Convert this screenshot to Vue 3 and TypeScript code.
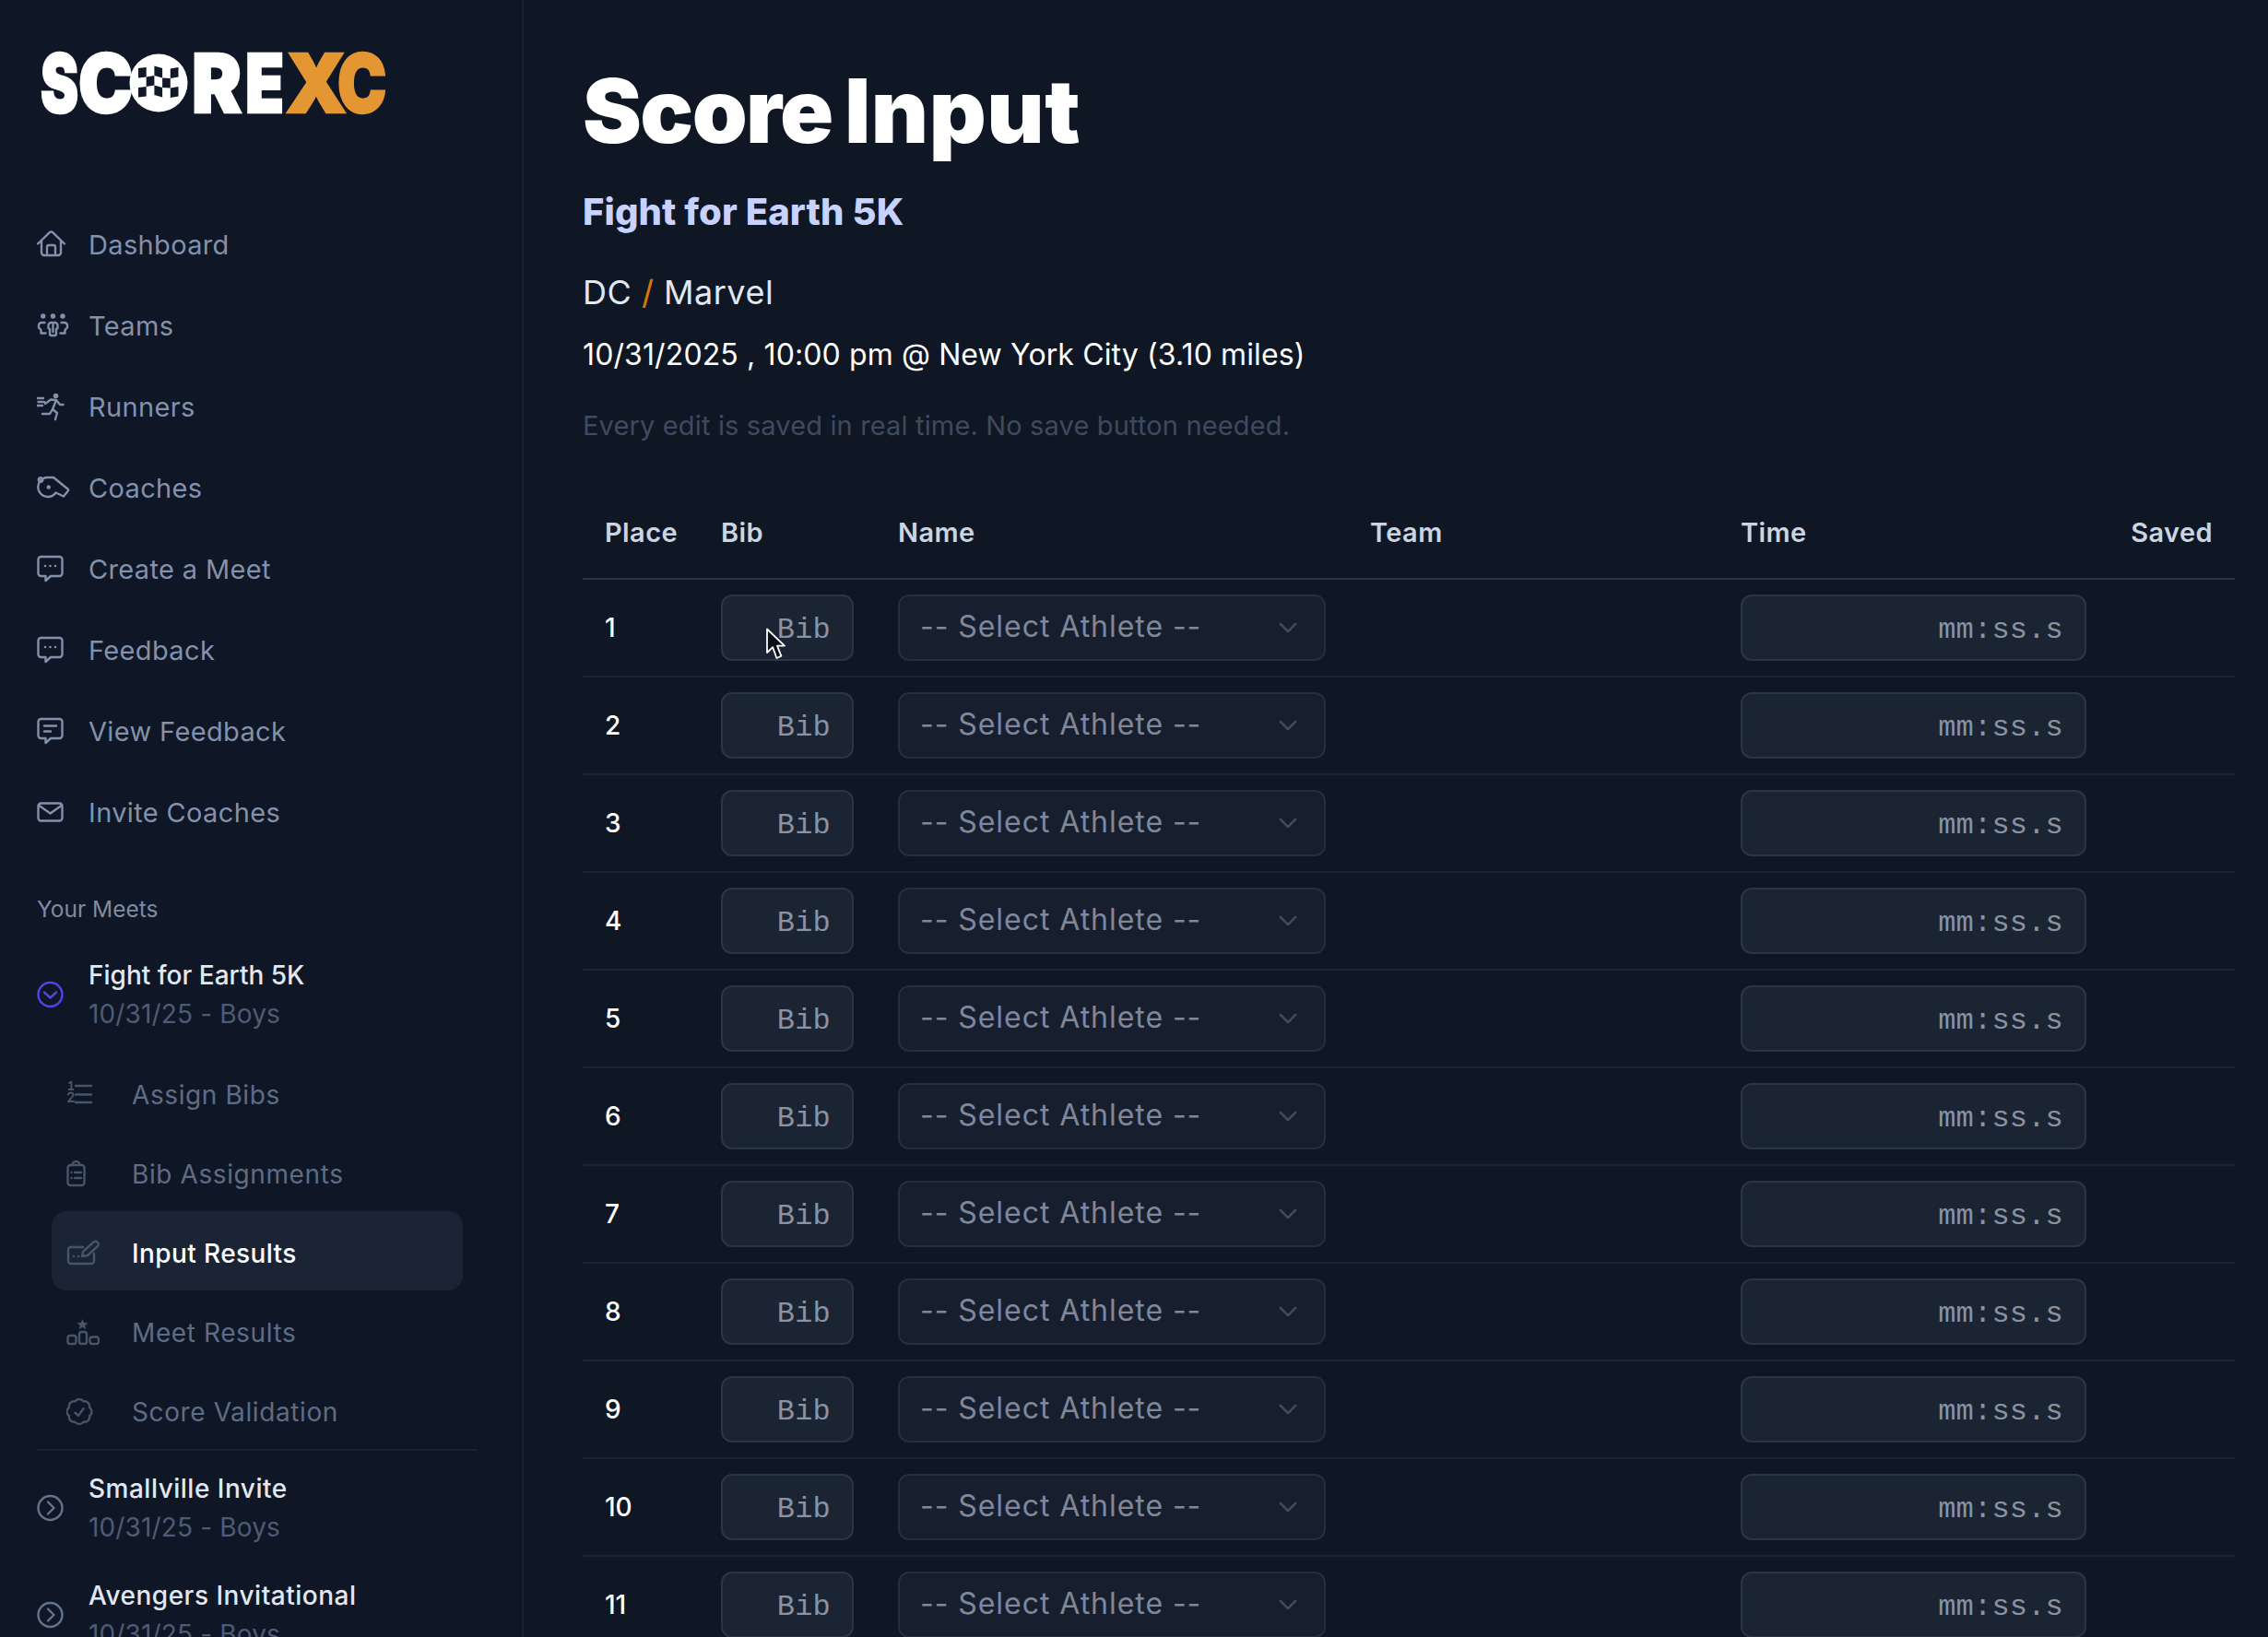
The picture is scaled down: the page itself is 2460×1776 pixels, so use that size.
<script setup lang="ts">
interface NavItem { label: string; icon: string }
interface Meet { name: string; date: string; open: boolean }

const stroke = (d: string) => `<path d="${d}"/>`
const dots = (pts: number[][], r = 1.3) =>
  pts.map(([x, y]) => `<circle cx="${x}" cy="${y}" r="${r}" fill="currentColor" stroke="none"/>`).join('')

const chatShape = 'M4.5 5H24.5a3 3 0 0 1 3 3V23a3 3 0 0 1-3 3H15L9.5 31V26H4.5a3 3 0 0 1-3-3V8a3 3 0 0 1 3-3z'

const icons: Record<string, string> = {
  home: stroke('M1 17.5 13.8 5.2a2.4 2.4 0 0 1 3.4 0L30 17.5M5 14V27a3 3 0 0 0 3 3H23a3 3 0 0 0 3-3V14M11 30V21a2 2 0 0 1 2-2h5a2 2 0 0 1 2 2V30'),
  teams:
    dots([[6.7, 8], [17.5, 8], [28, 8]], 2.7) +
    stroke('M12.5 18a3 3 0 0 1 3-3h4a3 3 0 0 1 3 3v3l-1.5 1v5a2 2 0 0 1-2 2h-3a2 2 0 0 1-2-2v-5l-1.5-1zM17.5 17v8M8.5 15H5a3 3 0 0 0-3 3v2.5L4.5 23v3.5h5M26.5 15H30a3 3 0 0 1 3 3v2.5L30.5 23v3.5h-5'),
  runner:
    dots([[20.5, 6.5]], 2.8) +
    stroke('M0 9H7M1.5 13H8M0 17H6M9 15 15 10.5 21 11 25 16H28.5M21 11 17 21 22 25 20 32M17 21 14 26H6'),
  whistle:
    stroke('M12 7H18L33.8 19.8a1.2 1.2 0 0 1-.1 1.9L29 27.5 20.5 23.5A10.5 10.5 0 1 1 12 7z') +
    dots([[12.7, 17.5]], 2.2) +
    '<circle cx="4" cy="9.5" r="2.2"/>',
  chat: stroke(chatShape) + dots([[9, 15], [14.5, 15], [20, 15]]),
  lines: stroke(chatShape) + stroke('M8 12.5H21M8 18.5H15'),
  mail: '<rect x="1.5" y="8.5" width="26" height="19" rx="3"/>' + stroke('M2.5 11 14.5 19.5 26.5 11'),
  list:
    stroke('M10 11H27M10 20.5H27M10 29H27') +
    '<g stroke-width="2"><path d="M3 8l2.4-1.5V15M2.6 15H7.4M2 20.5a2.8 2.8 0 0 1 5.5.6c0 1.8-3.6 4-5.5 7H8"/></g>',
  clipboard:
    '<rect x="1.5" y="11" width="18" height="22" rx="3"/>' +
    stroke('M6.5 11a4 4 0 0 1 8 0M9 19H16M9 25H16') +
    dots([[5.5, 19], [5.5, 25]], 1.2),
  edit:
    stroke('M18 14H5a3 3 0 0 0-3 3V29a3 3 0 0 0 3 3H27a3 3 0 0 0 3-3V21M17 24l1-5L29 9a3 3 0 0 1 5 4L23 23z') +
    dots([[8, 24], [13, 24]]),
  podium:
    '<path fill="currentColor" stroke="none" d="M17.5 6l1.7 3.9 4.3.4-3.2 2.8 1 4.2-3.8-2.2-3.8 2.2 1-4.2-3.2-2.8 4.3-.4z"/>' +
    '<rect x="1.5" y="24" width="9" height="9" rx="2.5"/><rect x="14" y="20" width="8" height="13" rx="2.5"/><rect x="25.5" y="25.5" width="9.5" height="7.5" rx="2.5"/>',
  badge:
    '<g transform="translate(-4 2.5) scale(1.5)" stroke-width="1.6"><path d="M9 12.75 11.25 15 15 9.75M21 12c0 1.268-.63 2.39-1.593 3.068a3.745 3.745 0 0 1-1.043 3.296 3.745 3.745 0 0 1-3.296 1.043A3.745 3.745 0 0 1 12 21c-1.268 0-2.39-.63-3.068-1.593a3.746 3.746 0 0 1-3.296-1.043 3.746 3.746 0 0 1-1.043-3.296A3.745 3.745 0 0 1 3 12c0-1.268.63-2.39 1.593-3.068a3.745 3.745 0 0 1 1.043-3.296 3.746 3.746 0 0 1 3.296-1.043A3.746 3.746 0 0 1 12 3c1.268 0 2.39.63 3.068 1.593a3.746 3.746 0 0 1 3.296 1.043 3.746 3.746 0 0 1 1.043 3.296A3.745 3.745 0 0 1 21 12Z"/></g>',
  open: '<circle cx="14.5" cy="18" r="13"/>' + stroke('M8 15.5 14.5 21.5 21 15.5'),
  closed: '<circle cx="14.5" cy="18" r="13"/>' + stroke('M12 11.5 18.5 18 12 24.5'),
}

const nav: NavItem[] = [
  { label: 'Dashboard', icon: 'home' },
  { label: 'Teams', icon: 'teams' },
  { label: 'Runners', icon: 'runner' },
  { label: 'Coaches', icon: 'whistle' },
  { label: 'Create a Meet', icon: 'chat' },
  { label: 'Feedback', icon: 'chat' },
  { label: 'View Feedback', icon: 'lines' },
  { label: 'Invite Coaches', icon: 'mail' },
]

const subNav: (NavItem & { active?: boolean })[] = [
  { label: 'Assign Bibs', icon: 'list' },
  { label: 'Bib Assignments', icon: 'clipboard' },
  { label: 'Input Results', icon: 'edit', active: true },
  { label: 'Meet Results', icon: 'podium' },
  { label: 'Score Validation', icon: 'badge' },
]

const others: Meet[] = [
  { name: 'Smallville Invite', date: '10/31/25 - Boys', open: false },
  { name: 'Avengers Invitational', date: '10/31/25 - Boys', open: false },
]

const places = Array.from({ length: 12 }, (_, i) => i + 1)

const colX = [10, 18.7, 27.4, 36.1, 44.8, 53.5]
const rowY = [15, 25.5, 36, 46.5]
const wave = [1, 0, -1.5, 1, 1.5, 0]
const flag = [
  [0, 0], [2, 0], [4, 0],
  [1, 1], [3, 1],
  [0, 2], [2, 2], [4, 2],
].map(([c, r]) =>
  [
    [colX[c], rowY[r] + wave[c]],
    [colX[c + 1], rowY[r] + wave[c + 1]],
    [colX[c + 1], rowY[r + 1] + wave[c + 1]],
    [colX[c], rowY[r + 1] + wave[c]],
  ].map((p) => p.join(',')).join(' '),
)
</script>

<template>
  <div class="page">
    <aside class="sidebar">
      <div class="logo" role="img" aria-label="ScoreXC">
        <span class="ltr l-s">S</span>
        <span class="ltr l-c">C</span>
        <svg class="logo-o" viewBox="0 0 64 64" width="64" height="64" aria-hidden="true">
          <circle cx="32" cy="32" r="31.5" fill="#fff" />
          <polygon v-for="p in flag" :key="p" :points="p" fill="#111827" />
        </svg>
        <span class="ltr l-r">R</span>
        <span class="ltr l-e">E</span>
        <span class="ltr l-x">X</span>
        <span class="ltr l-c2">C</span>
      </div>

      <nav class="nav">
        <a v-for="item in nav" :key="item.label" class="nav-item">
          <svg class="ico" viewBox="0 0 36 36" v-html="icons[item.icon]" />
          <span>{{ item.label }}</span>
        </a>
      </nav>

      <div class="section-label">Your Meets</div>

      <div class="meet first">
        <svg class="ico ico-open" viewBox="0 0 36 36" v-html="icons.open" />
        <div class="meet-text">
          <div class="meet-name">Fight for Earth 5K</div>
          <div class="meet-date">10/31/25 - Boys</div>
        </div>
      </div>

      <div class="subnav">
        <a v-for="item in subNav" :key="item.label" class="sub-item" :class="{ active: item.active }">
          <svg class="ico" viewBox="0 0 36 36" v-html="icons[item.icon]" />
          <span class="sub-label">{{ item.label }}</span>
        </a>
      </div>

      <div class="meets-rest">
        <div v-for="m in others" :key="m.name" class="meet">
          <svg class="ico ico-closed" viewBox="0 0 36 36" v-html="icons.closed" />
          <div class="meet-text">
            <div class="meet-name rest">{{ m.name }}</div>
            <div class="meet-date">{{ m.date }}</div>
          </div>
        </div>
      </div>
    </aside>

    <main class="main">
      <h1 class="title">Score <span class="title-b">Input</span></h1>
      <h2 class="subtitle">Fight for Earth 5K</h2>
      <div class="teams">DC <span class="slash">/</span> Marvel</div>
      <div class="when">10/31/2025 , 10:00 pm @ New York City (3.10 miles)</div>
      <p class="notice">Every edit is saved in real time. No save button needed.</p>

      <div class="table">
        <div class="row head">
          <div>Place</div>
          <div>Bib</div>
          <div>Name</div>
          <div>Team</div>
          <div>Time</div>
          <div class="saved">Saved</div>
        </div>
        <div v-for="n in places" :key="n" class="row">
          <div class="place">{{ n }}</div>
          <div><input class="field bib" type="text" placeholder="Bib" /></div>
          <div class="select-wrap">
            <select class="select">
              <option>-- Select Athlete --</option>
            </select>
            <svg class="chev" viewBox="0 0 24 24" width="28" height="28" fill="none" stroke="currentColor" stroke-width="2.2" stroke-linecap="round" stroke-linejoin="round">
              <path d="M5 8.5l7 7 7-7" />
            </svg>
          </div>
          <div></div>
          <div><input class="field time" type="text" placeholder="mm:ss.s" /></div>
          <div></div>
        </div>
      </div>
    </main>

    <svg class="cursor" width="24" height="36" viewBox="0 0 24 36" aria-hidden="true">
      <path d="M2 1.5V27l6.2-5.8L12.4 33l5-2.2-4.4-11.2H21z" fill="#0b0f18" stroke="#fff" stroke-width="1.8" stroke-linejoin="round" />
    </svg>
  </div>
</template>

<style>
html, body { margin: 0; background: #0f1725; }
</style>

<style scoped>
.page {
  position: relative;
  display: flex;
  width: 2460px;
  height: 1776px;
  overflow: hidden;
  background: #0f1725;
  font-family: Inter, "Noto Sans", sans-serif;
}
.sidebar {
  flex: none;
  width: 568px;
  box-sizing: border-box;
  padding: 58px 50px 0 40px;
  border-right: 2px solid #1a2231;
  background: #0f1625;
}
.logo {
  display: flex;
  align-items: center;
  height: 64px;
  margin-left: 4px;
  color: #fff;
}
.ltr {
  display: block;
  font-size: 88px;
  font-weight: 900;
  line-height: 64px;
  transform-origin: left center;
  -webkit-text-stroke: 2.5px currentColor;
}
.l-s { width: 38px; margin-right: 3px; transform: scaleX(.7); }
.l-c { width: 55px; transform: scaleX(.9); }
.logo-o { flex: none; margin: 0 4px 0 0; }
.l-r { width: 55px; margin-right: 3px; transform: scaleX(.92); }
.l-e { width: 39px; margin-right: 5px; transform: scaleX(.78); }
.l-x { width: 56px; color: #e49632; transform: scaleX(.95); }
.l-c2 { width: 51px; color: #e49632; transform: scaleX(.81); }

.nav { margin-top: 99px; }
.nav-item {
  display: flex;
  align-items: center;
  gap: 20px;
  height: 88px;
  font-size: 29px;
  letter-spacing: .35px;
  color: #8391ab;
}
.ico {
  flex: none;
  width: 36px;
  height: 36px;
  fill: none;
  stroke: currentColor;
  stroke-width: 2.4;
  stroke-linecap: round;
  stroke-linejoin: round;
}
.section-label {
  margin-top: 43px;
  height: 36px;
  line-height: 36px;
  font-size: 24.5px;
  color: #7f8ba3;
}
.meet {
  display: flex;
  align-items: center;
  gap: 20px;
  height: 84px;
}
.meet.first { margin-top: 33px; }
.ico-open { color: #4f46e5; }
.ico-closed { color: #64748b; }
.meet-name {
  font-size: 28px;
  line-height: 42px;
  font-weight: 500;
  color: #e2e8f0;
}
.meet-name.rest { letter-spacing: .5px; }
.meet-date {
  font-size: 28px;
  line-height: 42px;
  letter-spacing: .15px;
  color: #4f5b73;
}
.subnav { margin: 21px 0 0 16px; width: 446px; }
.sub-item {
  display: flex;
  align-items: center;
  gap: 34px;
  height: 86px;
  padding-left: 16px;
  border-radius: 16px;
  font-size: 28px;
  letter-spacing: .6px;
  color: #5f6c86;
}
.sub-label { position: relative; top: 3px; left: 1px; }
.sub-item .ico { color: #475569; }
.sub-item.active {
  background: #1a2434;
  color: #fff;
  font-weight: 500;
  letter-spacing: .4px;
}
.meets-rest {
  display: flex;
  flex-direction: column;
  gap: 32px;
  width: 478px;
  padding-top: 20px;
  border-top: 2px solid #1a2231;
}

.main {
  flex: 1;
  min-width: 0;
  padding: 62px 36px 0 64px;
}
.title {
  margin: 0;
  font-size: 96px;
  line-height: 116px;
  font-weight: 900;
  letter-spacing: -1.6px;
  word-spacing: -4px;
  color: #fff;
}
.title-b { letter-spacing: .6px; }
.subtitle {
  margin: 24px 0 0;
  font-size: 40px;
  line-height: 56px;
  font-weight: 800;
  letter-spacing: .1px;
  color: #c7d2fe;
}
.teams {
  margin-top: 31px;
  font-size: 36px;
  line-height: 56px;
  letter-spacing: .5px;
  color: #e2e8f0;
}
.slash { color: #d97706; }
.when {
  margin-top: 12px;
  font-size: 32px;
  line-height: 56px;
  letter-spacing: .12px;
  color: #fff;
}
.notice {
  margin: 21px 0 0;
  font-size: 29px;
  line-height: 56px;
  letter-spacing: .15px;
  color: #3f4a5e;
}
.table { margin-top: 37px; }
.row {
  display: grid;
  grid-template-columns: 126px 192px 512px 402px 1fr auto;
  align-items: center;
  min-height: 104px;
  border-bottom: 2px solid #1b2331;
}
.row > div { padding-left: 24px; }
.row > div:last-child { padding: 0 24px 0 0; }
.head {
  min-height: 0;
  height: 102px;
  box-sizing: border-box;
  border-bottom-color: #2b3445;
  font-size: 29px;
  letter-spacing: .4px;
  font-weight: 600;
  color: #cbd5e1;
}
.place {
  font-size: 28px;
  font-weight: 500;
  color: #fff;
}
.field {
  display: block;
  box-sizing: border-box;
  height: 72px;
  padding: 4px 23px 0 24px;
  border: 2px solid #2b3548;
  border-radius: 12px;
  background: #1b2433;
  color: #e2e8f0;
  font-family: "Liberation Mono", monospace;
  font-size: 32px;
  letter-spacing: .2px;
  text-align: right;
  outline: none;
}
.field::placeholder { color: #8a92a3; opacity: 1; }
.bib { width: 144px; }
.time { width: 375px; }
.select-wrap { position: relative; }
.select {
  display: block;
  box-sizing: border-box;
  width: 464px;
  height: 72px;
  padding: 0 22px 4px;
  border: 2px solid #252e40;
  border-radius: 12px;
  background: #171f2e;
  color: #80879a;
  font-family: Inter, sans-serif;
  font-size: 32px;
  letter-spacing: .95px;
  appearance: none;
  outline: none;
}
.chev {
  position: absolute;
  top: 22px;
  left: 433px;
  color: #434c5d;
  pointer-events: none;
}
.cursor {
  position: absolute;
  left: 830px;
  top: 681px;
  pointer-events: none;
}
</style>
